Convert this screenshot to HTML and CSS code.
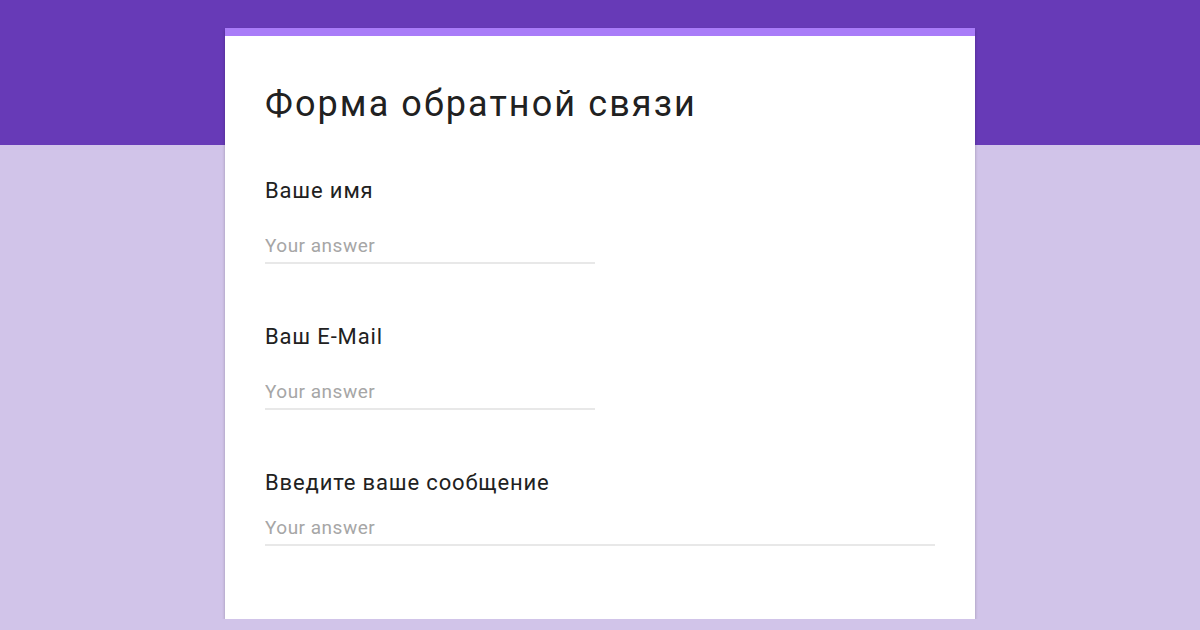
FILE: index.html
```html
<!DOCTYPE html>
<html lang="ru">
<head>
  <meta charset="UTF-8">
  <meta name="viewport" content="width=device-width, initial-scale=1.0">
  <title>Форма обратной связи</title>
  <link rel="stylesheet" href="styles.css">
</head>
<body>
  <div class="band"></div>
  <main class="page">
    <form class="card">
      <h1 class="title">Форма обратной связи</h1>

      <div class="question">
        <label class="label" for="name">Ваше имя</label>
        <input class="answer" type="text" id="name" placeholder="Your answer">
      </div>

      <div class="question">
        <label class="label" for="email">Ваш E-Mail</label>
        <input class="answer" type="text" id="email" placeholder="Your answer">
      </div>

      <div class="question question-long">
        <label class="label" for="message">Введите ваше сообщение</label>
        <input class="answer answer-wide" type="text" id="message" placeholder="Your answer">
      </div>
    </form>
  </main>
</body>
</html>
```

FILE: styles.css
```css
/* Page */
body {
  margin: 0;
  background: #d1c4e9;
  font-family: Roboto, 'Noto Sans', sans-serif;
  color: #212121;
  overflow: hidden;
}

.band {
  height: 145px;
  background: #673ab7;
}

.page {
  margin-top: -117px; /* card sits over the purple band */
  display: flex;
  justify-content: center;
}

/* Form card */
.card {
  width: 750px;
  height: 591px;
  box-sizing: border-box;
  background: #ffffff;
  border-top: 8px solid #a97cf8;
  box-shadow: 0 2px 3px rgba(0, 0, 0, 0.25);
  padding: 0 40px;
}

.title {
  margin: 44px 0 0;
  font-size: 36px;
  font-weight: 400;
  letter-spacing: 2.1px;
  line-height: 48px;
  color: #212121;
}

/* Questions */
.question {
  margin-top: 48px;
}

.question + .question {
  margin-top: 58px;
}

.label {
  display: block;
  font-size: 22px;
  letter-spacing: 0.85px;
  line-height: 30px;
  color: #212121;
}

.answer {
  display: block;
  width: 330px;
  margin-top: 28px;
  padding: 0 0 4px;
  border: none;
  border-bottom: 2px solid #e8e8e8;
  font-family: inherit;
  font-size: 19px;
  letter-spacing: 0.5px;
  line-height: 24px;
  color: #212121;
  background: transparent;
  outline: none;
}

.answer::placeholder {
  color: #a6a6a6;
}

.question-long .answer {
  margin-top: 18px;
}

.answer-wide {
  width: 670px;
}
```
